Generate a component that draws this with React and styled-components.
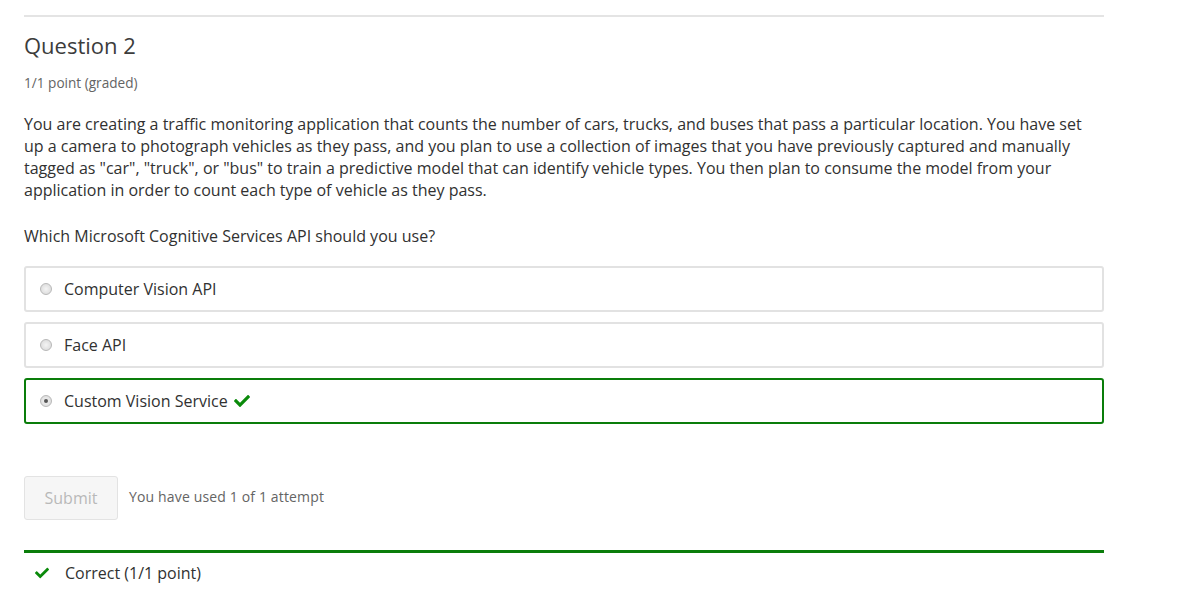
import styled, { createGlobalStyle } from "styled-components";
import { FaCheck } from "react-icons/fa";

const Global = createGlobalStyle`
  body {
    margin: 0;
    background: #fff;
    font-family: "Open Sans", "Liberation Sans", sans-serif;
    color: #313131;
  }
`;

const Page = styled.div`
  width: 1080px;
  padding: 15px 0 0 24px;
`;

const Rule = styled.hr`
  margin: 0;
  border: 0;
  height: 2px;
  background: #e4e4e4;
`;

const Title = styled.h3`
  margin: 14px 0 0;
  font-size: 22px;
  font-weight: 400;
  line-height: 28px;
  color: #3c3c3c;
`;

const Points = styled.div`
  margin-top: 15px;
  font-size: 13.6px;
  line-height: 18px;
  color: #646464;
`;

const Para = styled.p`
  margin: ${(p) => p.top || 24}px 0 0;
  font-size: 16px;
  line-height: 22px;
  color: #313131;
`;

const Options = styled.div`
  margin-top: 19px;
  display: flex;
  flex-direction: column;
  gap: 10px;
`;

const Option = styled.label`
  display: flex;
  align-items: center;
  height: 46px;
  box-sizing: border-box;
  border: 2px solid ${(p) => (p.correct ? "#0a7d0a" : "#e2e2e2")};
  border-radius: 3px;
  padding-left: 14px;
  font-size: 16px;
  color: #313131;
`;

const Radio = styled.span`
  width: 12px;
  height: 12px;
  border-radius: 50%;
  box-sizing: border-box;
  border: 1px solid #b8b8b8;
  background: radial-gradient(circle, #f4f4f4 0%, #d6d6d6 100%);
  margin-right: 12px;
  display: flex;
  align-items: center;
  justify-content: center;
  &::after {
    content: "";
    display: ${(p) => (p.checked ? "block" : "none")};
    width: 4px;
    height: 4px;
    border-radius: 50%;
    background: #555;
  }
`;

const Check = styled(FaCheck)`
  color: #0a8a0a;
  font-size: 16px;
  margin-left: 6px;
`;

const Actions = styled.div`
  margin-top: 52px;
  display: flex;
  align-items: center;
  gap: 11px;
`;

const Submit = styled.button`
  width: 94px;
  height: 44px;
  border: 1px solid #e3e3e3;
  border-radius: 3px;
  background: #f6f6f6;
  color: #b9b9b9;
  font-family: inherit;
  font-size: 16px;
`;

const Attempts = styled.span`
  font-size: 14px;
  letter-spacing: 0.15px;
  color: #646464;
  margin-top: -4px;
`;

const Result = styled.div`
  margin-top: 30px;
  border-top: 3px solid #0a7d0a;
  padding: 9px 0 0 11px;
  display: flex;
  align-items: center;
  gap: 16px;
  font-size: 16px;
  color: #313131;
`;

const ResultCheck = styled(FaCheck)`
  color: #0a8a0a;
  font-size: 14px;
`;

export default function App() {
  return (
    <Page>
      <Global />
      <Rule />
      <Title>Question 2</Title>
      <Points>1/1 point (graded)</Points>
      <Para top={21}>
        You are creating a traffic monitoring application that counts the number of cars, trucks, and
        buses that pass a particular location. You have set up a camera to photograph vehicles as they
        pass, and you plan to use a collection of images that you have previously captured and manually
        tagged as "car", "truck", or "bus" to train a predictive model that can identify vehicle types.
        You then plan to consume the model from your application in order to count each type of vehicle
        as they pass.
      </Para>
      <Para>Which Microsoft Cognitive Services API should you use?</Para>
      <Options>
        <Option>
          <Radio />
          Computer Vision API
        </Option>
        <Option>
          <Radio />
          Face API
        </Option>
        <Option correct>
          <Radio checked />
          Custom Vision Service
          <Check />
        </Option>
      </Options>
      <Actions>
        <Submit disabled>Submit</Submit>
        <Attempts>You have used 1 of 1 attempt</Attempts>
      </Actions>
      <Result>
        <ResultCheck />
        Correct (1/1 point)
      </Result>
    </Page>
  );
}
